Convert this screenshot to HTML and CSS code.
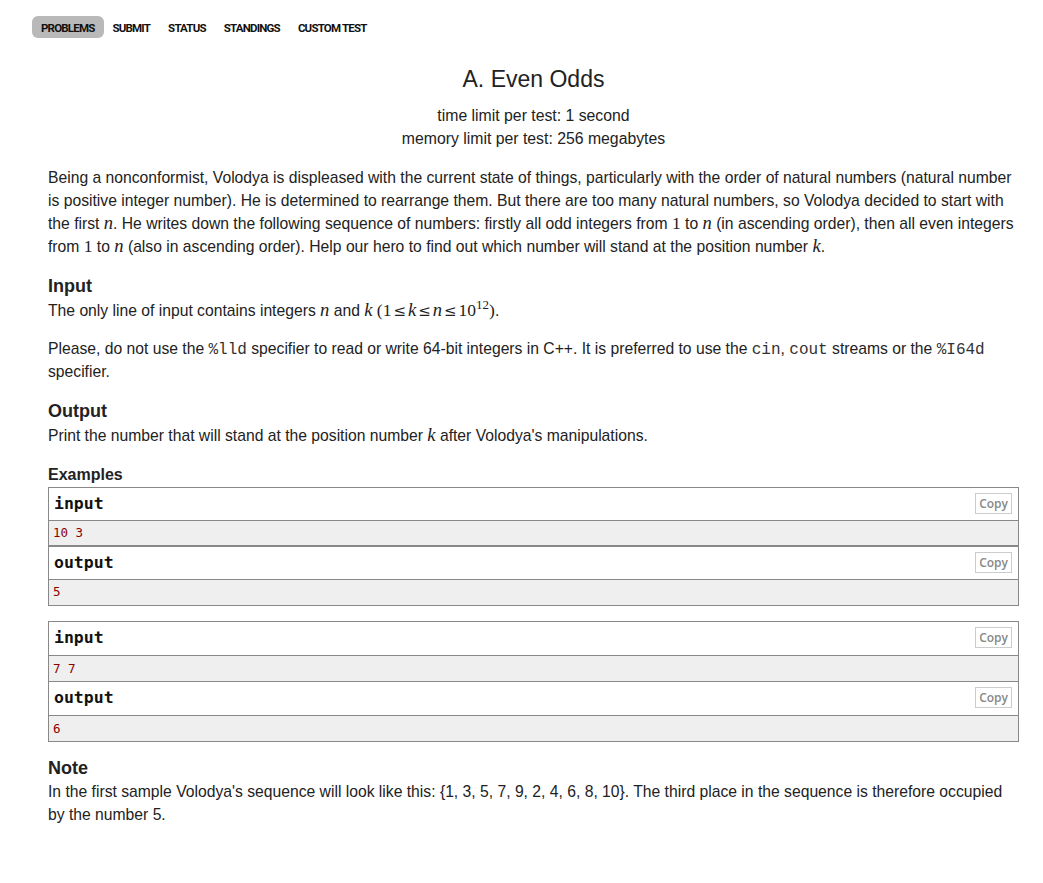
FILE: index.html
```html
<!DOCTYPE html>
<html>
<head>
<meta charset="utf-8">
<link rel="stylesheet" href="styles.css">
</head>
<body>
<nav class="nav">
  <a class="nav-item active">PROBLEMS</a>
  <a class="nav-item">SUBMIT</a>
  <a class="nav-item">STATUS</a>
  <a class="nav-item">STANDINGS</a>
  <a class="nav-item">CUSTOM TEST</a>
</nav>
<main class="problem">
  <div class="header">
    <div class="title">A. Even Odds</div>
    <div class="limit">time limit per test: 1 second</div>
    <div class="limit">memory limit per test: 256 megabytes</div>
  </div>

  <p class="para">Being a nonconformist, Volodya is displeased with the current state of things, particularly with the order of natural numbers (natural number is positive integer number). He is determined to rearrange them. But there are too many natural numbers, so Volodya decided to start with the first <span class="mi">n</span>. He writes down the following sequence of numbers: firstly all odd integers from <span class="mn">1</span> to <span class="mi">n</span> (in ascending order), then all even integers from <span class="mn">1</span> to <span class="mi">n</span> (also in ascending order). Help our hero to find out which number will stand at the position number <span class="mi">k</span>.</p>

  <section class="section">
    <div class="section-title">Input</div>
    <p class="para">The only line of input contains integers <span class="mi">n</span> and <span class="mi">k</span> <span class="math"><span class="mn">(1</span><span class="mo">≤</span><span class="mi">k</span><span class="mo">≤</span><span class="mi">n</span><span class="mo">≤</span><span class="mn">10</span><sup class="msup">12</sup><span class="mn">)</span></span>.</p>
    <p class="para gap">Please, do not use the <code class="code">%lld</code> specifier to read or write 64-bit integers in C++. It is preferred to use the <code class="code">cin</code>, <code class="code">cout</code> streams or the <code class="code">%I64d</code> specifier.</p>
  </section>

  <section class="section">
    <div class="section-title">Output</div>
    <p class="para">Print the number that will stand at the position number <span class="mi">k</span> after Volodya's manipulations.</p>
  </section>

  <section class="section">
    <div class="section-title small">Examples</div>
    <div class="sample">
      <div class="block">
        <div class="block-title"><span>input</span><button class="copy">Copy</button></div>
        <pre class="block-data">10 3</pre>
      </div>
      <div class="block second thick">
        <div class="block-title"><span>output</span><button class="copy">Copy</button></div>
        <pre class="block-data">5</pre>
      </div>
    </div>
    <div class="sample tall">
      <div class="block">
        <div class="block-title"><span>input</span><button class="copy">Copy</button></div>
        <pre class="block-data">7 7</pre>
      </div>
      <div class="block second">
        <div class="block-title"><span>output</span><button class="copy">Copy</button></div>
        <pre class="block-data">6</pre>
      </div>
    </div>
  </section>

  <section class="section note">
    <div class="section-title">Note</div>
    <p class="para">In the first sample Volodya's sequence will look like this: {1, 3, 5, 7, 9, 2, 4, 6, 8, 10}. The third place in the sequence is therefore occupied by the number 5.</p>
  </section>
</main>
</body>
</html>
```

FILE: styles.css
```css
html, body {
  margin: 0;
  padding: 0;
  background: #ffffff;
}

body {
  font-family: "Liberation Sans", Arial, sans-serif;
  color: #222222;
}

.nav {
  display: flex;
  padding: 16px 0 0 32px;
  height: 22px;
}

.nav-item {
  display: block;
  height: 22px;
  box-sizing: border-box;
  padding: 1px 9px 0 9px;
  border-radius: 6px;
  font-family: "Roboto", sans-serif;
  font-weight: bold;
  font-size: 11.5px;
  line-height: 22px;
  letter-spacing: -0.8px;
  color: #111111;
}

.nav-item.active {
  background: #b9b9b9;
}

.problem {
  width: 971px;
  margin-left: 48px;
  font-size: 15.7px;
  line-height: 23px;
}

.header {
  text-align: center;
  padding-top: 26px;
}

.title {
  font-size: 23px;
  line-height: 30px;
  margin-bottom: 10px;
}

.limit {
  font-size: 15.8px;
  line-height: 23px;
}

.para {
  margin: 16px 0 0 0;
}

.section {
  margin-top: 16px;
}

.section .para {
  margin-top: 0;
}

.section .para.gap {
  margin-top: 15px;
}

.section-title {
  font-weight: bold;
  font-size: 18px;
  line-height: 25px;
}

.section-title.small {
  font-size: 16px;
  line-height: 23px;
}

.mi {
  font-family: "Liberation Serif", "DejaVu Serif", serif;
  font-style: italic;
  font-size: 18.5px;
  line-height: 0;
}

.mn {
  font-family: "Liberation Serif", "DejaVu Serif", serif;
  font-size: 17.5px;
  line-height: 0;
}

.mo {
  font-family: "DejaVu Serif", serif;
  font-size: 15px;
  line-height: 0;
  padding: 0 2px;
}

.math {
  white-space: nowrap;
  line-height: 0;
}

.msup {
  font-family: "Liberation Serif", serif;
  font-size: 13px;
  line-height: 0;
  vertical-align: 7px;
}

.code {
  font-family: "Liberation Mono", "Courier New", monospace;
  font-size: 16px;
  line-height: 0;
  color: #333333;
}

.sample {
  margin-top: 1px;
  border: 1px solid #888888;
}

.sample + .sample {
  margin-top: 15px;
}

.block.second {
  border-top: 1px solid #888888;
}

.block.second.thick {
  border-top-width: 2px;
}

.block-title {
  display: flex;
  align-items: flex-start;
  justify-content: space-between;
  height: 32px;
  padding: 0 6px 0 5px;
  border-bottom: 1px solid #888888;
  font-family: "DejaVu Sans Mono", monospace;
  font-weight: bold;
  font-size: 16.5px;
  line-height: 31px;
  color: #111111;
}

.tall .block-title {
  height: 33px;
  line-height: 32px;
}

.copy {
  height: 21px;
  padding: 0 3px;
  margin: 5px 0 0 0;
  border: 1px solid #cccccc;
  background: #ffffff;
  font-family: "Open Sans", sans-serif;
  font-size: 12px;
  font-weight: 600;
  color: #888888;
  line-height: 19px;
}

.block-data {
  margin: 0;
  height: 24px;
  padding: 0 4px;
  background: #efefef;
  font-family: "DejaVu Sans Mono", monospace;
  font-size: 12.5px;
  line-height: 24px;
  color: #8b0000;
}

.second .block-data {
  height: 25px;
}

.tall .block-data {
  height: 25px;
  line-height: 25px;
}

.note {
  margin-top: 15px;
}

.note .section-title {
  line-height: 23px;
}
```
